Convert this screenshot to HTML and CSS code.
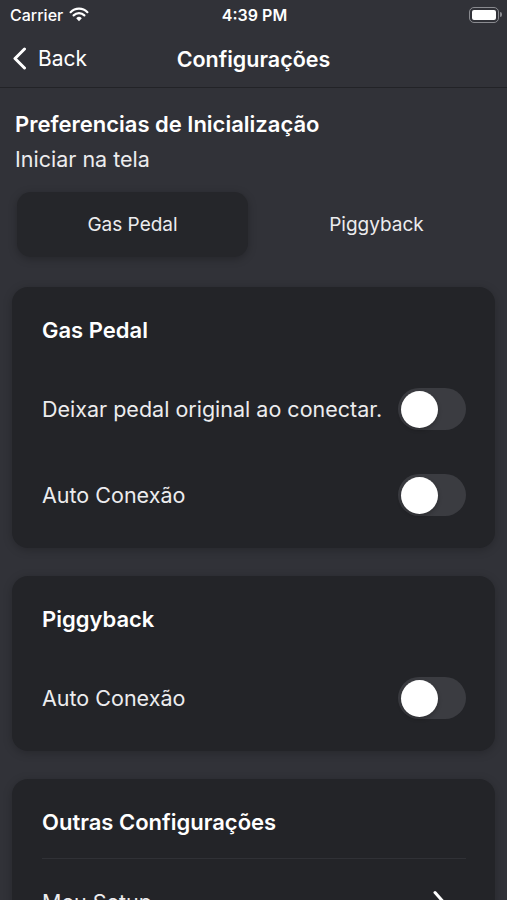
FILE: index.html
```html
<!DOCTYPE html>
<html lang="pt">
<head>
  <meta charset="UTF-8" />
  <meta name="viewport" content="width=device-width, initial-scale=1.0"/>
  <title>Configurações</title>
  <link rel="stylesheet" href="styles.css">
</head>
<body>
  <div class="screen">
    <!-- BARRA DE STATUS -->
    <div class="status-bar">
      <span class="carrier">
        Carrier
        <svg class="wifi" width="20" height="15" viewBox="0 0 20 15">
          <path d="M10 14.2 L7.2 11.2 A4 4 0 0 1 12.8 11.2 Z" fill="#fff"/>
          <path d="M4.6 8.4 A7.7 7.7 0 0 1 15.4 8.4" stroke="#fff" stroke-width="2.2" fill="none" stroke-linecap="round"/>
          <path d="M1.6 5.2 A11.8 11.8 0 0 1 18.4 5.2" stroke="#fff" stroke-width="2.2" fill="none" stroke-linecap="round"/>
        </svg>
      </span>
      <span class="time">4:39 PM</span>
      <span class="battery"><span class="battery-level"></span></span>
    </div>

    <!-- NAVEGAÇÃO -->
    <header class="nav">
      <a class="back" href="#">
        <svg width="15" height="23" viewBox="0 0 15 23">
          <path d="M12.5 2 L3 11.5 L12.5 21" stroke="#fff" stroke-width="3" fill="none" stroke-linecap="round" stroke-linejoin="round"/>
        </svg>
        Back
      </a>
      <h1>Configurações</h1>
    </header>

    <main class="content">
      <!-- PREFERÊNCIAS -->
      <section class="startup">
        <h2>Preferencias de Inicialização</h2>
        <p>Iniciar na tela</p>
        <div class="segmented">
          <button class="active">Gas Pedal</button>
          <button>Piggyback</button>
        </div>
      </section>

      <section class="card">
        <h3>Gas Pedal</h3>
        <div class="row">
          <span>Deixar pedal original ao conectar.</span>
          <span class="switch"></span>
        </div>
        <div class="row">
          <span>Auto Conexão</span>
          <span class="switch"></span>
        </div>
      </section>

      <section class="card">
        <h3>Piggyback</h3>
        <div class="row">
          <span>Auto Conexão</span>
          <span class="switch"></span>
        </div>
      </section>

      <section class="card">
        <h3>Outras Configurações</h3>
        <div class="row divided">
          <span>Meu Setup</span>
          <svg class="chevron" width="14" height="23" viewBox="0 0 14 23">
            <path d="M3 2.5 L11 11.5 L3 20.5" stroke="#fff" stroke-width="3" fill="none" stroke-linecap="round" stroke-linejoin="round"/>
          </svg>
        </div>
      </section>
    </main>
  </div>
</body>
</html>
```

FILE: styles.css
```css
/* Cores */
:root {
  --bg-page: #313238;
  --bg-card: #232428;
  --bg-segment: #25262a;
  --text-main: #ffffff;
  --text-body: #ececee;
  --switch-off: #3b3c41;
  --divider: #303136;
}
* { box-sizing: border-box; margin: 0; padding: 0; }
html, body {
  background: var(--bg-page);
}
body {
  color: var(--text-main);
  font-family: Inter, "Noto Sans", sans-serif;
  height: 900px;
  overflow: hidden;
}
.screen {
  width: 507px;
}

/* STATUS */
.status-bar {
  display: grid;
  grid-template-columns: 1fr auto 1fr;
  align-items: center;
  height: 30px;
  padding: 0 8px 0 10px;
}
.carrier {
  display: flex;
  align-items: center;
  gap: 6px;
  font-size: 16px;
  font-weight: 500;
}
.wifi {
  margin-top: -1px;
}
.time {
  font-size: 16px;
  font-weight: 600;
}
.battery {
  justify-self: end;
  position: relative;
  display: flex;
  width: 30px;
  height: 16px;
  padding: 2px;
  border: 1.5px solid #8a8b90;
  border-radius: 5px;
}
.battery::after {
  content: "";
  position: absolute;
  right: -4px;
  top: 4px;
  width: 2px;
  height: 5px;
  border-radius: 0 2px 2px 0;
  background: #8a8b90;
}
.battery-level {
  flex: 1;
  background: #fff;
  border-radius: 2px;
}

/* NAV */
.nav {
  display: grid;
  grid-template-columns: 1fr auto 1fr;
  align-items: center;
  height: 58px;
  border-bottom: 1px solid #222327;
}
.back {
  display: flex;
  align-items: center;
  gap: 11px;
  padding-left: 12px;
  color: var(--text-main);
  font-size: 21px;
  text-decoration: none;
}
.nav h1 {
  font-size: 21.5px;
  font-weight: 600;
}

/* CONTEÚDO */
.content {
  padding: 0 12px;
}
.startup {
  padding: 24px 3px 0;
}
.startup h2 {
  font-size: 22px;
  font-weight: 600;
  line-height: 24px;
}
.startup p {
  margin-top: 11px;
  color: var(--text-body);
  font-size: 21.5px;
  line-height: 24px;
}
.segmented {
  display: grid;
  grid-template-columns: 1fr 1fr;
  gap: 13px;
  margin: 21px 0 0 2px;
  height: 65px;
}
.segmented button {
  background: transparent;
  border: none;
  border-radius: 14px;
  color: var(--text-body);
  font-family: inherit;
  font-size: 19px;
}
.segmented button.active {
  background: var(--bg-segment);
  box-shadow: 0 2px 8px rgba(0,0,0,0.25);
}

/* CARTÕES */
.card {
  margin-top: 30px;
  padding: 28px 29px 10px 30px;
  background: var(--bg-card);
  border-radius: 16px;
  box-shadow: 0 2px 10px rgba(0,0,0,0.22);
}
.card + .card {
  margin-top: 28px;
}
.card h3 {
  font-size: 22px;
  font-weight: 600;
  line-height: 30px;
}
.row {
  display: flex;
  align-items: center;
  justify-content: space-between;
  height: 86px;
  color: var(--text-body);
  font-size: 21.5px;
}
.card h3 + .row {
  margin-top: 21px;
}
.row.divided {
  margin-top: 19px;
  border-top: 1px solid var(--divider);
}
.chevron {
  margin-right: 20px;
}

/* SWITCH */
.switch {
  display: flex;
  align-items: center;
  flex-shrink: 0;
  width: 68px;
  height: 42px;
  padding: 0 3px;
  border-radius: 21px;
  background: var(--switch-off);
}
.switch::before {
  content: "";
  width: 37px;
  height: 37px;
  border-radius: 50%;
  background: #fff;
  box-shadow: 0 2px 4px rgba(0,0,0,0.25);
}
```
